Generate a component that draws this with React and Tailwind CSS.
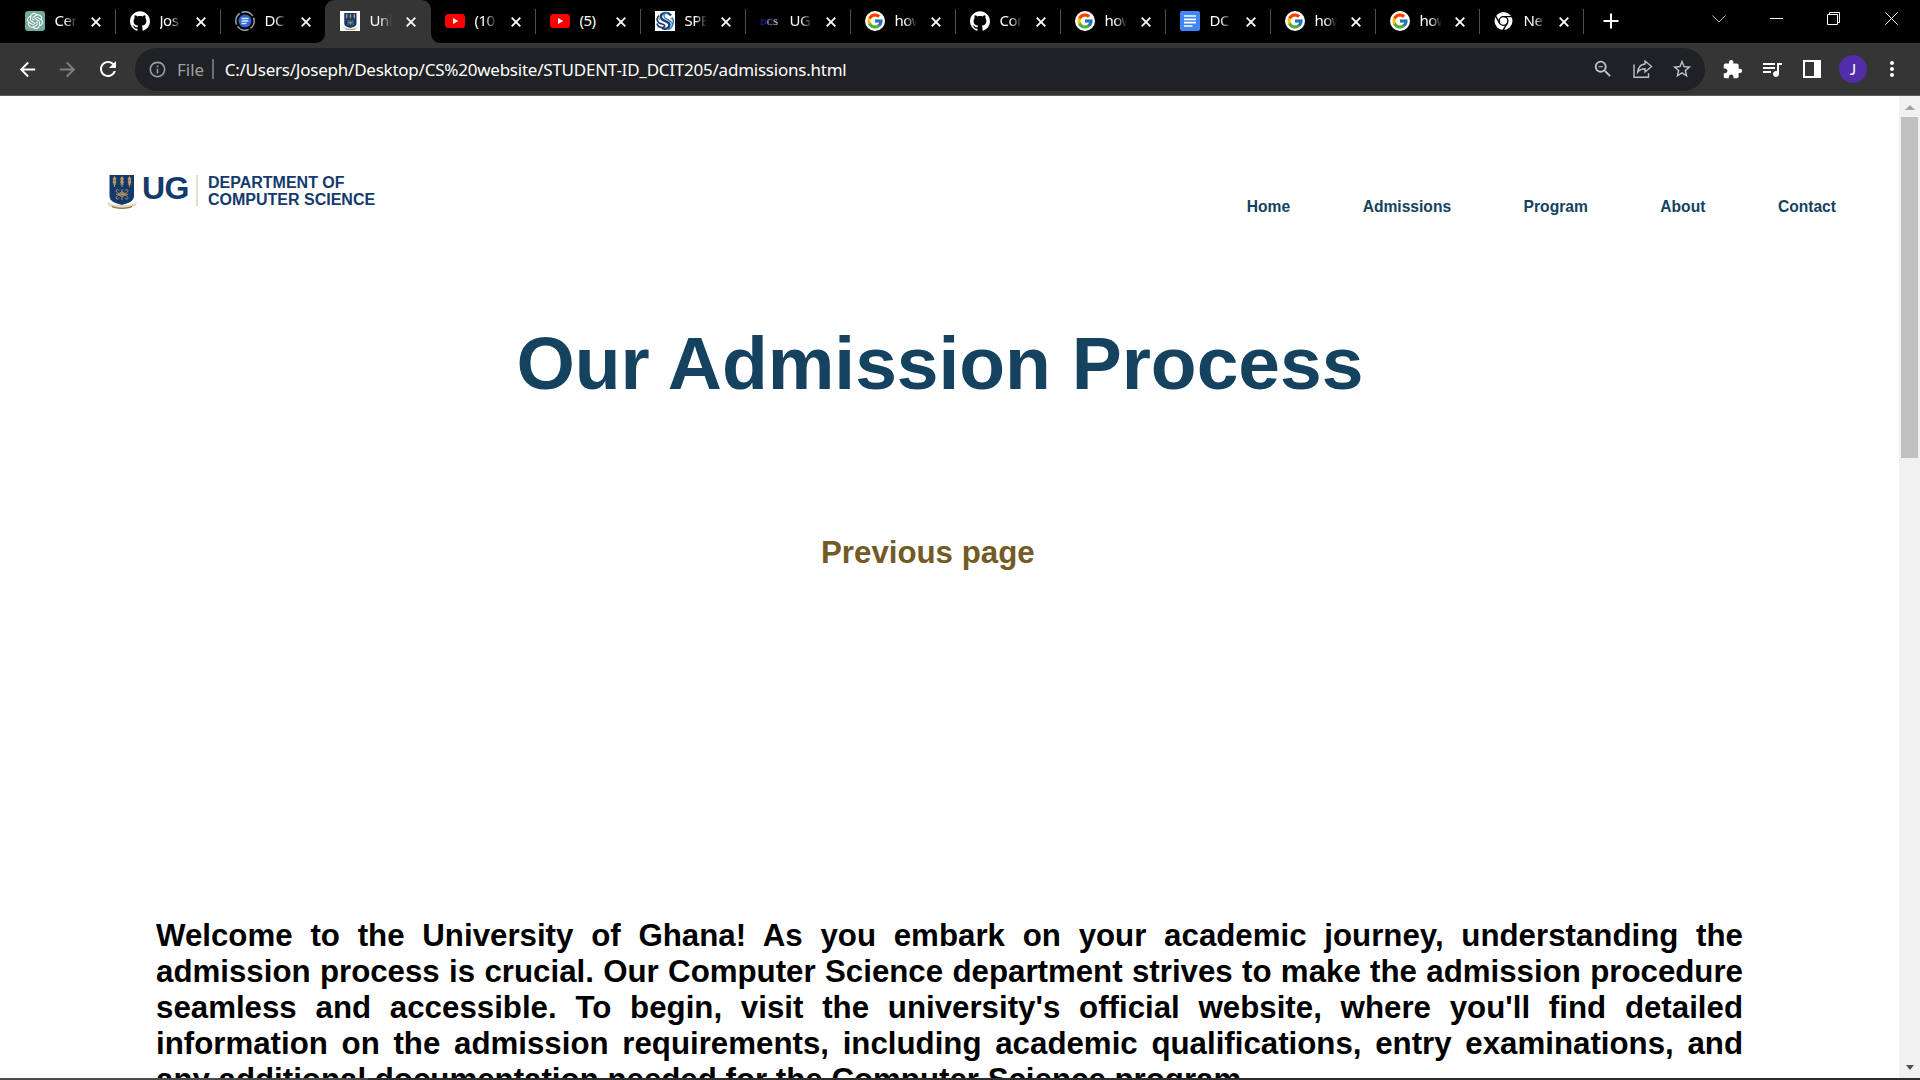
import React from 'react';
import { FcGoogle } from 'react-icons/fc';
import { SiOpenai, SiGithub } from 'react-icons/si';
import { MdArrowBack, MdArrowForward, MdRefresh, MdInfoOutline, MdStarBorder, MdExtension, MdQueueMusic, MdMoreVert, MdZoomOut } from 'react-icons/md';

function Crest({ className }) {
  return (
    <svg viewBox="0 0 30 34" className={className}>
      <path d="M2.500 0h24.500v21c0 3.500-3 6-6 7l-6.200 2-6.300-2c-3-1-6-3.500-6-7z" fill="#143a6d" />
      <g fill="#b89a62">
        <path d="M7.500 1l2 3-1 1.200 1 1.800-1 1.200.8 1.400H8v2.400H7V9.600H5.700l.8-1.400-1-1.200 1-1.800-1-1.200z" />
        <path d="M15 1l2 3-1 1.200 1 1.800-1 1.200.8 1.400h-1.300v2.400h-1V9.600h-1.300l.8-1.400-1-1.200 1-1.800-1-1.200z" />
        <path d="M22.500 1l2 3-1 1.200 1 1.800-1 1.200.8 1.400H23v2.400h-1V9.600h-1.300l.8-1.400-1-1.200 1-1.800-1-1.200z" />
        <path d="M0 27.500c3 0 4 2.800 15 2.800S27 27.500 30 27.500l-1.500 3.500c-3 .5-4 3-13.500 3s-10.500-2.500-13.500-3z" fill="#e3d8be" />
        <path d="M5 31q10 3.600 20 0v1.300q-10 3.200-20 0z" fill="#8d7648" />
      </g>
      <g fill="none" stroke="#b89a62" strokeWidth="0.9">
        <circle cx="15" cy="19.300" r="2.300" />
        <path d="M9 19.300h12M15 14v11M12 16c-1-3-4-1-2.500 1s4 1 5.500 2.300c1.500-1.300 4-.3 5.500-2.300s-1.500-4-2.500-1M12 22.600c-1 3-4 1-2.500-1s4-1 5.500-2.300c1.500 1.300 4 .3 5.500 2.300s-1.500 4-2.500 1" />
      </g>
    </svg>
  );
}

function GptIcon() {
  return (
    <span className="flex size-5 items-center justify-center rounded-[3px] bg-[#74aa9c]">
      <SiOpenai className="size-4 text-white" />
    </span>
  );
}

function HubIcon() {
  return <SiGithub className="size-5 text-white" />;
}

function DocRingIcon() {
  return (
    <svg viewBox="0 0 20 20" className="size-5">
      <circle cx="10" cy="10" r="9.200" fill="none" stroke="#9aa0a6" strokeWidth="1.500" strokeDasharray="12.500 2" strokeDashoffset="4" />
      <circle cx="10" cy="10" r="6.500" fill="#2f66cf" />
      <path d="M6.500 7.500h7M6.500 10h7M6.500 12.500h5" stroke="#dfe8fb" strokeWidth="1.300" />
    </svg>
  );
}

function CrestIcon() {
  return (
    <span className="flex size-5 items-center justify-center bg-white">
      <Crest className="h-[17px] w-[17px]" />
    </span>
  );
}

function VideoIcon() {
  return (
    <svg viewBox="0 0 20 20" className="size-5">
      <rect y="3" width="20" height="14" rx="3.500" fill="#f00" />
      <path d="M8 7l5.200 3L8 13z" fill="#fff" />
    </svg>
  );
}

function SwirlIcon() {
  return (
    <svg viewBox="0 0 20 20" className="size-5">
      <rect width="20" height="20" fill="#fff" />
      <g fill="none">
        <path d="M16 4.500C12.500 0 5 2 6 6.500s9 3.500 8.500 7.500-5 4.500-7.500 3" stroke="#1b3f78" strokeWidth="2.400" />
        <path d="M12.500 2.500C9 1.500 8 5 10 7s8 3 7.500 7-3.500 4-4.500 4.500" stroke="#2f8fc4" strokeWidth="1.500" />
        <path d="M4 4.500C0 9 3 12 7 13s3 3.500 0 3.500-4.500-2-5-4" stroke="#183768" strokeWidth="1.600" />
        <path d="M17 6.500c2 3 1.500 6 0 8" stroke="#3979ad" strokeWidth="1.500" />
      </g>
      <path d="M3.500 7.500l1.500 1M15.500 8l1.500-1" stroke="#d6584a" strokeWidth="1.200" />
    </svg>
  );
}

function DcsIcon() {
  return (
    <span className="flex h-5 w-5 items-center justify-center pr-0.5 pt-0.5 font-['Liberation_Serif',serif] text-[9px] font-bold leading-none text-[#20207c]">
      D<span className="text-[#7f88c9]">C</span>
      <span className="text-[#a9aee0]">S</span>
    </span>
  );
}

function GoogleIcon() {
  return (
    <span className="flex size-5 items-center justify-center rounded-full bg-white">
      <FcGoogle className="size-[18px]" />
    </span>
  );
}

function DocsIcon() {
  return (
    <svg viewBox="0 0 20 20" className="size-5">
      <rect width="20" height="20" rx="2" fill="#4285f4" />
      <path d="M4 5h12M4 8.300h12M4 11.700h12M4 15h8.500" stroke="#fff" strokeWidth="1.700" />
    </svg>
  );
}

function ChromeIcon() {
  return (
    <svg viewBox="0 0 20 20" className="size-5">
      <circle cx="9.500" cy="10" r="9" fill="#fff" />
      <circle cx="9.500" cy="10" r="4.400" fill="#fff" stroke="#000" strokeWidth="1.400" />
      <path d="M9.500 5.600h8.600M5.700 12.200L1.600 5.200M13.300 12.200l-4.300 7.200" stroke="#000" strokeWidth="1.400" />
    </svg>
  );
}

const TABS = [
  { icon: GptIcon, title: 'Cer' },
  { icon: HubIcon, title: 'Jos' },
  { icon: DocRingIcon, title: 'DC', bare: true },
  { icon: CrestIcon, title: 'Uni', active: true, bare: true },
  { icon: VideoIcon, title: '(10' },
  { icon: VideoIcon, title: '(5)', whole: true },
  { icon: SwirlIcon, title: 'SPE' },
  { icon: DcsIcon, title: 'UG' },
  { icon: GoogleIcon, title: 'how' },
  { icon: HubIcon, title: 'Con' },
  { icon: GoogleIcon, title: 'how' },
  { icon: DocsIcon, title: 'DC' },
  { icon: GoogleIcon, title: 'how' },
  { icon: GoogleIcon, title: 'how', narrow: true },
  { icon: ChromeIcon, title: 'Ne', narrow: true },
];

function Tab({ icon: Icon, title, active, bare, whole, narrow }) {
  return (
    <div className={`relative flex h-[43px] shrink-0 items-center pl-3.5 ${narrow ? 'w-[104px]' : 'w-[105px]'}`}>
      {active && (
        <svg viewBox="0 0 126 43" className="absolute -left-[11px] top-0 h-[43px] w-[126px]">
          <path d="M0 43c6 0 10-4 10-10V10C10 4 14 0 20 0h86c6 0 10 4 10 10v23c0 6 4 10 10 10z" fill="#353535" />
        </svg>
      )}
      <span className="relative mb-px size-5 shrink-0">
        <Icon />
      </span>
      <span
        className={`relative ml-[9.500px] w-[22.500px] overflow-hidden whitespace-nowrap pb-[3px] text-[15px] leading-5 tracking-[-0.5px] text-white ${
          whole ? '' : '[mask-image:linear-gradient(to_right,#000_45%,transparent)]'
        }`}
      >
        {title}
      </span>
      <svg viewBox="0 0 10 10" className={`relative size-2.5 shrink-0 ${narrow ? 'ml-[13px]' : 'ml-3.5'}`}>
        <path d="M.7.700l8.600 8.600M9.300.7L.7 9.300" stroke="#fff" strokeWidth="1.800" />
      </svg>
      {!bare && <span className="ml-auto h-[25px] w-px bg-[#4d4d4d]" />}
    </div>
  );
}

function TabStrip() {
  return (
    <div className="flex h-[43px] bg-black pl-[11px]">
      {TABS.map((tab, i) => (
        <Tab key={i} {...tab} />
      ))}
      <svg viewBox="0 0 16 16" className="ml-[19px] mt-[13px] size-4 shrink-0">
        <path d="M8 .5v15M.5 8h15" stroke="#fff" strokeWidth="2" />
      </svg>
      <div className="ml-auto flex h-[37px] items-center">
        <svg viewBox="0 0 14 8" className="mr-11 h-2 w-3.5">
          <path d="M.5.500L7 7 13.500.5" fill="none" stroke="#bbb" />
        </svg>
        <svg viewBox="0 0 13 13" className="mr-11 size-[13px]">
          <path d="M0 6.500h13" stroke="#fff" />
        </svg>
        <svg viewBox="0 0 13 13" className="mr-[45px] size-[13px]">
          <path d="M.5 2.500h10v10H.5zM2.500 2.500v-2h10v10h-2" fill="none" stroke="#fff" />
        </svg>
        <svg viewBox="0 0 13 13" className="mr-[22px] size-[13px]">
          <path d="M.3.300l12.400 12.400M12.700.3L.3 12.700" stroke="#fff" />
        </svg>
      </div>
    </div>
  );
}

function Toolbar() {
  return (
    <div className="flex h-[53px] items-center border-b border-[#5c5c5c] bg-[#353535] pl-4 text-white">
      <MdArrowBack className="size-[23px]" />
      <MdArrowForward className="ml-[17px] size-[23px] text-[#808080]" />
      <MdRefresh className="ml-[17px] size-6" />
      <div className="ml-[15px] flex h-[43px] w-[1570px] items-center rounded-full bg-[#202124] pl-[13px] pr-3 text-[17px] leading-none">
        <MdInfoOutline className="size-[19px] text-[#9aa0a6]" />
        <span className="ml-2.5 text-[#9aa0a6]">File</span>
        <span className="ml-2 h-5 w-0.5 bg-[#6b6e72]" />
        <span className="ml-[10.500px] whitespace-nowrap tracking-[-0.235px]">C:/Users/Joseph/Desktop/CS%20website/STUDENT-ID_DCIT205/admissions.html</span>
        <MdZoomOut className="ml-auto size-[22px] text-[#bdc1c6]" />
        <svg viewBox="0 0 20 18" className="ml-[19px] h-[18px] w-5" fill="none" stroke="#bdc1c6" strokeWidth="1.400">
          <path d="M1 4.500v12.700h14.500v-4" />
          <path d="M12 1l6.500 5.500L12 12V8.800c-3.500 0-5.500 1-7.300 3.400.5-4.500 3-7.700 7.300-8.200z" />
        </svg>
        <MdStarBorder className="ml-[18px] size-[22px] text-[#bdc1c6]" />
      </div>
      <MdExtension className="ml-[17px] size-[21px]" />
      <MdQueueMusic className="ml-[17px] size-6" />
      <span className="ml-[19px] h-[18px] w-[18px] border-2 border-r-[7px] border-white" />
      <span className="ml-[18px] flex size-7 items-center justify-center rounded-full bg-[#512da8] font-['Lato',sans-serif] text-[15px]">J</span>
      <MdMoreVert className="ml-[13px] size-6" />
    </div>
  );
}

function Scrollbar() {
  return (
    <div className="flex w-[21px] shrink-0 flex-col items-center bg-[#f1f1f1]">
      <svg viewBox="0 0 10 5" className="mt-[9px] h-[5px] w-2.5">
        <path d="M0 5l5-5 5 5z" fill="#a3a3a3" />
      </svg>
      <span className="mt-[7px] h-[341px] w-[17px] bg-[#c1c1c1]" />
      <svg viewBox="0 0 8 5" className="mb-2 mt-auto h-[5px] w-2">
        <path d="M0 0l4 5 4-5z" fill="#505050" />
      </svg>
    </div>
  );
}

function Logo() {
  return (
    <div className="flex text-[#143a6d]">
      <Crest className="h-[34px] w-[30px]" />
      <span className="ml-[5px] text-[32px] font-bold leading-[27px] tracking-[-0.5px]">UG</span>
      <span className="ml-[7px] h-[31px] w-0.5 bg-[#e6dccb]" />
      <span className="ml-[10px] whitespace-nowrap text-[16px] font-bold leading-[16.500px]">
        DEPARTMENT OF
        <br />
        COMPUTER SCIENCE
      </span>
    </div>
  );
}

function Page() {
  return (
    <main className="h-[982px] min-w-0 flex-1 overflow-hidden bg-white font-['Liberation_Sans',Arial,sans-serif] font-bold">
      <header className="flex h-[222px] justify-between pl-[107px] pr-[63px] pt-[79px]">
        <Logo />
        <nav className="mt-[23px] flex gap-[72.500px] text-[15.625px] leading-[18px] text-[#14425f]">
          <span>Home</span>
          <span>Admissions</span>
          <span>Program</span>
          <span>About</span>
          <span>Contact</span>
        </nav>
      </header>
      <h1 className="pl-[516.500px] text-[75px] leading-[90px] tracking-[-0.03px] text-[#14425f]">Our Admission Process</h1>
      <p className="pl-[821px] pt-[127px] text-[31.250px] leading-[36px] text-[#735b26]">Previous page</p>
      <p className="ml-[156px] mt-[347px] w-[1587px] text-justify text-[31.250px] leading-[36px] text-black">
        Welcome to the University of Ghana! As you embark on your academic journey, understanding the admission process is crucial. Our Computer Science
        department strives to make the admission procedure seamless and accessible. To begin, visit the university's official website, where you'll find
        detailed information on the admission requirements, including academic qualifications, entry examinations, and any additional documentation needed
        for the Computer Science program.
      </p>
    </main>
  );
}

export default function App() {
  return (
    <div className="flex h-[1080px] w-[1920px] flex-col overflow-hidden bg-white font-['Noto_Sans','Open_Sans',sans-serif]">
      <TabStrip />
      <Toolbar />
      <div className="flex h-[982px]">
        <Page />
        <Scrollbar />
      </div>
      <div className="flex h-0.5 bg-[#2d2d2d]">
        <span className="w-[368px] bg-[#4a4a4a]" />
      </div>
    </div>
  );
}
